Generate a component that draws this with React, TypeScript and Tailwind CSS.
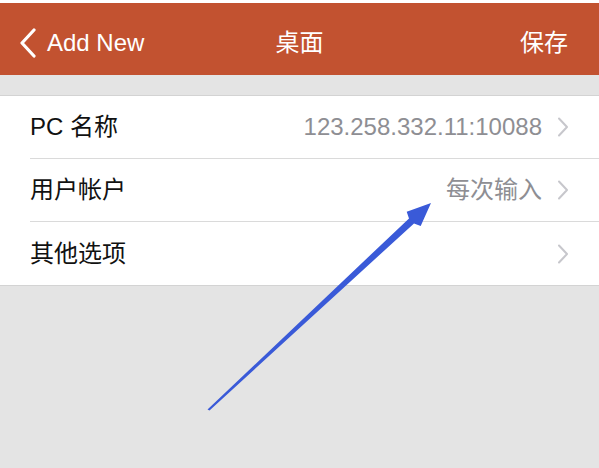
import React from "react";

const rows = [
  { label: "PC 名称", value: "123.258.332.11:10088" },
  { label: "用户帐户", value: "每次输入" },
  { label: "其他选项", value: "" },
];

function Chevron({ className }: { className?: string }) {
  return (
    <svg width="12" height="20" viewBox="0 0 12 20" className={className} fill="none">
      <path d="M2 1.5 L10 10 L2 18.5" stroke="currentColor" strokeWidth="2" strokeLinecap="round" strokeLinejoin="round" />
    </svg>
  );
}

export default function App() {
  return (
    <div
      className="relative flex h-[468px] w-[599px] flex-col overflow-hidden bg-[#e4e4e4]"
      style={{ fontFamily: '"Liberation Sans", "Noto Sans CJK SC", sans-serif' }}
    >
      <div className="h-[3px] bg-white" />
      <header className="relative flex h-[72px] items-center bg-[#c25230] pt-[8px] text-white">
        <div className="flex items-center pl-[19px]">
          <svg width="18" height="30" viewBox="0 0 18 30" fill="none">
            <path d="M15 2 L3 15 L15 28" stroke="white" strokeWidth="3.2" strokeLinecap="round" strokeLinejoin="round" />
          </svg>
          <span className="ml-[10px] text-[24px] leading-none">Add New</span>
        </div>
        <div className="pointer-events-none absolute left-0 right-0 text-center text-[24px] leading-none">桌面</div>
        <div className="ml-auto pr-[31px] text-[24px] leading-none">保存</div>
      </header>
      <div className="h-[21px] border-b border-[#d3d3d3]" />
      <ul className="border-b border-[#d3d3d3] bg-white">
        {rows.map((r, i) => (
          <li key={r.label} className="pl-[30px]">
            <div
              className={
                "flex h-[63px] items-center pr-[30px] " +
                (i < rows.length - 1 ? "border-b border-[#dadada]" : "")
              }
            >
              <span className="text-[24px] text-[#111]">{r.label}</span>
              <span className="ml-auto text-[24px] text-[#8e8e93]">{r.value}</span>
              <Chevron className="ml-[15px] text-[#c7c7cc]" />
            </div>
          </li>
        ))}
      </ul>
      <svg className="pointer-events-none absolute left-0 top-0" width="599" height="468">
        <polygon
          points="207.5,409.5 209.5,410.5 414,223.4 420.7,226 431,203 406.7,211.7 409,218.4"
          fill="#3a5ad8"
        />
      </svg>
    </div>
  );
}
